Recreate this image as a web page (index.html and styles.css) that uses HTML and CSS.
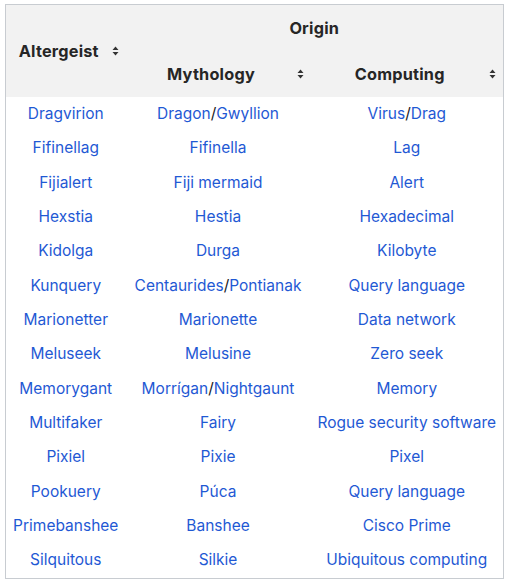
FILE: index.html
```html
<!DOCTYPE html>
<html>
<head>
<meta charset="utf-8">
<link rel="stylesheet" href="styles.css">
</head>
<body>
<table class="wikitable">
  <colgroup>
    <col class="c1"><col class="c2"><col class="c3">
  </colgroup>
  <thead>
    <tr>
      <th rowspan="2" class="sortable">Altergeist<span class="sort"><svg width="7" height="10" viewBox="0 0 7 10"><path d="M3.5 0.5 L6.5 4 L0.5 4 Z M0.5 6 L6.5 6 L3.5 9.5 Z" fill="#333"/></svg></span></th>
      <th colspan="2" class="group">Origin</th>
    </tr>
    <tr>
      <th class="sortable">Mythology<span class="sort"><svg width="7" height="10" viewBox="0 0 7 10"><path d="M3.5 0.5 L6.5 4 L0.5 4 Z M0.5 6 L6.5 6 L3.5 9.5 Z" fill="#333"/></svg></span></th>
      <th class="sortable">Computing<span class="sort"><svg width="7" height="10" viewBox="0 0 7 10"><path d="M3.5 0.5 L6.5 4 L0.5 4 Z M0.5 6 L6.5 6 L3.5 9.5 Z" fill="#333"/></svg></span></th>
    </tr>
  </thead>
  <tbody>
    <tr><td><a>Dragvirion</a></td><td><a>Dragon</a>/<a>Gwyllion</a></td><td><a>Virus</a>/<a>Drag</a></td></tr>
    <tr><td><a>Fifinellag</a></td><td><a>Fifinella</a></td><td><a>Lag</a></td></tr>
    <tr><td><a>Fijialert</a></td><td><a>Fiji mermaid</a></td><td><a>Alert</a></td></tr>
    <tr><td><a>Hexstia</a></td><td><a>Hestia</a></td><td><a>Hexadecimal</a></td></tr>
    <tr><td><a>Kidolga</a></td><td><a>Durga</a></td><td><a>Kilobyte</a></td></tr>
    <tr><td><a>Kunquery</a></td><td><a>Centaurides</a>/<a>Pontianak</a></td><td><a>Query language</a></td></tr>
    <tr><td><a>Marionetter</a></td><td><a>Marionette</a></td><td><a>Data network</a></td></tr>
    <tr><td><a>Meluseek</a></td><td><a>Melusine</a></td><td><a>Zero seek</a></td></tr>
    <tr><td><a>Memorygant</a></td><td><a>Morrígan</a>/<a>Nightgaunt</a></td><td><a>Memory</a></td></tr>
    <tr><td><a>Multifaker</a></td><td><a>Fairy</a></td><td><a>Rogue security software</a></td></tr>
    <tr><td><a>Pixiel</a></td><td><a>Pixie</a></td><td><a>Pixel</a></td></tr>
    <tr><td><a>Pookuery</a></td><td><a>Púca</a></td><td><a>Query language</a></td></tr>
    <tr><td><a>Primebanshee</a></td><td><a>Banshee</a></td><td><a>Cisco Prime</a></td></tr>
    <tr><td><a>Silquitous</a></td><td><a>Silkie</a></td><td><a>Ubiquitous computing</a></td></tr>
  </tbody>
</table>
</body>
</html>
```
FILE: styles.css
```css
html, body {
  margin: 0;
  padding: 0;
  background: #ffffff;
}
body {
  padding: 4px 4px 0 5px;
  font-family: Inter, "Noto Sans", sans-serif;
  font-size: 15.5px;
  color: #202122;
}
.wikitable {
  width: 499px;
  border-collapse: collapse;
  border: 1px solid #c8ccd1;
  table-layout: fixed;
}
.c1 { width: 120px; }
.c2 { width: 185px; }
.c3 { width: auto; }
.wikitable th {
  background: #f2f2f2;
  font-weight: 700;
  font-size: 16.3px;
  letter-spacing: 0.2px;
  color: #262626;
  line-height: 24px;
  padding: 11px 21px 11px 7px;
  text-align: center;
  position: relative;
}
.wikitable th.group {
  padding-right: 7px;
}
.sort {
  position: absolute;
  right: 7px;
  top: 50%;
  margin-top: -5px;
  width: 7px;
  height: 10px;
  display: block;
}
.sort svg { display: block; }
.wikitable td {
  text-align: center;
  line-height: 24.35px;
  padding: 5px 4px;
  white-space: nowrap;
}
.wikitable a {
  color: #1f59d4;
  text-decoration: none;
}
```
